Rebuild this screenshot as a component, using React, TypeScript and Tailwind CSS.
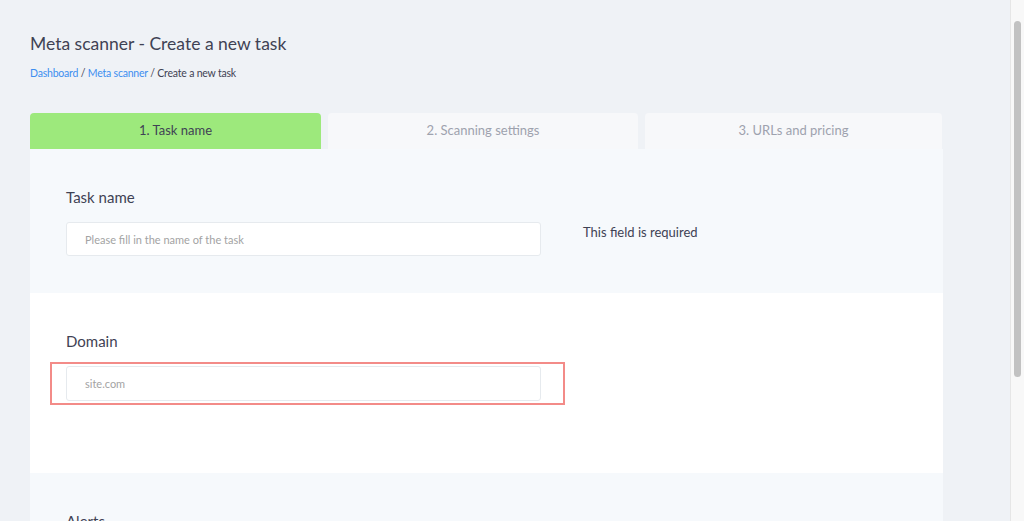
const tabs = [
  { label: '1. Task name', width: 'w-[291px]', active: true },
  { label: '2. Scanning settings', width: 'w-[310px]', active: false },
  { label: '3. URLs and pricing', width: 'w-[297px]', active: false },
];

const App = () => {
  return (
    <div
      className="flex h-[521px] w-[1024px] overflow-hidden bg-[#eff2f6] text-[#3f4254]"
      style={{ fontFamily: 'Lato, "Noto Sans", sans-serif' }}
    >
      <main className="flex-1 pl-[30px] pt-[32px]">
        <h1 className="text-[17.5px] leading-[24px] text-[#3f4254]">Meta scanner - Create a new task</h1>
        <div className="mt-[10px] text-[10.5px] leading-[14px] tracking-[-0.2px]">
          <a href="#" className="text-[#3d8ef0]">Dashboard</a>
          <span> / </span>
          <a href="#" className="text-[#3d8ef0]">Meta scanner</a>
          <span> / Create a new task</span>
        </div>

        <div className="mt-[33px] flex gap-[7px]">
          {tabs.map((tab) => (
            <div
              key={tab.label}
              className={`${tab.width} flex h-[36px] items-center justify-center rounded-t-[4px] text-[13px] ${
                tab.active ? 'bg-[#9de97c] text-[#3f4254]' : 'bg-[#f7f8fa] text-[#9ea2ae]'
              }`}
            >
              {tab.label}
            </div>
          ))}
        </div>

        <div className="w-[913px]">
          <section className="bg-[#f6f9fc] px-[36px] pb-[37px] pt-[38px]">
            <label className="block text-[15px] leading-[20px]">Task name</label>
            <div className="mt-[15px] flex items-start gap-[42px]">
              <input
                type="text"
                placeholder="Please fill in the name of the task"
                className="h-[34px] w-[475px] rounded-[3px] border border-[#e6eaee] bg-white px-[18px] text-[11px] outline-none placeholder:text-[#a3a3a3]"
              />
              <p className="pt-[1px] text-[13px] leading-[18px]">This field is required</p>
            </div>
          </section>

          <section className="bg-white px-[36px] pb-[68px] pt-[38px]">
            <label className="block text-[15px] leading-[20px]">Domain</label>
            <div className="-ml-[16px] mt-[11px] h-[43px] w-[515px] border-2 border-[#f38b88] pl-[14px] pt-[2px]">
              <input
                type="text"
                placeholder="site.com"
                className="h-[35px] w-[475px] rounded-[3px] border border-[#e6eaee] bg-white px-[18px] text-[11px] outline-none placeholder:text-[#a3a3a3]"
              />
            </div>
          </section>

          <section className="h-[200px] bg-[#f6f9fc] px-[36px] pt-[38px]">
            <label className="block text-[15px] leading-[20px]">Alerts</label>
          </section>
        </div>
      </main>

      <div className="w-[14px] border-l border-[#e6e6e6] bg-[#f8f8f8] pt-[21px]">
        <div className="mx-auto h-[356px] w-[7px] rounded-full bg-[#c2c2c2]" />
      </div>
    </div>
  );
};

export default App;
